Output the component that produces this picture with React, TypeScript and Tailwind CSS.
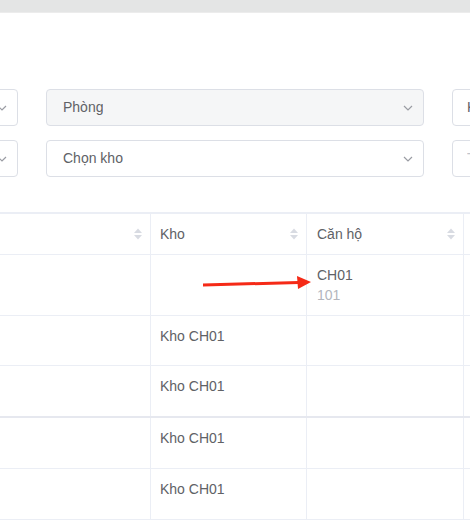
import React from "react";

const Chevron = () => (
  <svg width="10" height="6" viewBox="0 0 10 6" className="shrink-0">
    <polyline points="1,1 5,5 9,1" fill="none" stroke="#9a9ca3" strokeWidth="1.2" />
  </svg>
);

const SortCaret = () => (
  <svg width="10" height="14" viewBox="0 0 10 14" className="shrink-0">
    <polygon points="1,6 5,1.5 9,6" fill="#d8dbe2" />
    <polygon points="1,8 5,12.5 9,8" fill="#d8dbe2" />
  </svg>
);

type SelectProps = {
  width: string;
  value?: string;
  placeholder?: boolean;
  disabled?: boolean;
  arrow?: boolean;
  pad?: string;
};

function Select({ width, value, placeholder, disabled, arrow = true, pad = "pl-[16px]" }: SelectProps) {
  return (
    <div
      className={`${width} shrink-0 h-[37px] rounded-[4px] border border-[#dcdfe6] flex items-center justify-between ${pad} pr-[10px] ${
        disabled ? "bg-[#f5f6f7]" : "bg-white"
      }`}
    >
      <span className={`truncate ${placeholder ? "text-[#c0c4cc]" : "text-[#606266]"}`}>{value}</span>
      {arrow && <Chevron />}
    </div>
  );
}

const rows = [
  { kho: "", canho: "CH01", sub: "101", h: "h-[61px]", thick: false },
  { kho: "Kho CH01", canho: "", sub: "", h: "h-[50px]", thick: false },
  { kho: "Kho CH01", canho: "", sub: "", h: "h-[52px]", thick: true },
  { kho: "Kho CH01", canho: "", sub: "", h: "h-[51px]", thick: false },
  { kho: "Kho CH01", canho: "", sub: "", h: "h-[51px]", thick: false },
];

export default function App() {
  return (
    <div className="relative w-[470px] h-[520px] overflow-hidden bg-white text-[14px] text-[#606266] font-['Liberation_Sans',Arial,sans-serif]">
      {/* top bar */}
      <div className="h-[13px] bg-[#e4e5e5] border-b border-[#ececec]" />

      {/* filters */}
      <div className="pt-[76px] flex flex-col gap-[14px]">
        <div className="flex gap-[28px] ml-[-82px]">
          <Select width="w-[100px]" />
          <Select width="w-[378px]" value="Phòng" disabled />
          <Select width="w-[200px]" value="Khách hàng" arrow={false} pad="pl-[14px]" />
        </div>
        <div className="flex gap-[28px] ml-[-82px]">
          <Select width="w-[100px]" />
          <Select width="w-[378px]" value="Chọn kho" />
          <Select width="w-[200px]" value="Tìm kiếm" placeholder arrow={false} pad="pl-[14px]" />
        </div>
      </div>

      {/* table */}
      <div className="mt-[35px] w-[640px] border-t-2 border-[#ebeef5]">
        <div className="flex h-[41px] border-b border-[#ebeef5]">
          <div className="w-[151px] shrink-0 border-r border-[#ebeef5] flex items-center justify-end pr-[7px]">
            <SortCaret />
          </div>
          <div className="w-[156px] shrink-0 border-r border-[#ebeef5] flex items-center justify-between pl-[9px] pr-[7px]">
            <span>Kho</span>
            <SortCaret />
          </div>
          <div className="w-[157px] shrink-0 border-r border-[#ebeef5] flex items-center justify-between pl-[10px] pr-[7px]">
            <span>Căn hộ</span>
            <SortCaret />
          </div>
          <div className="flex-1" />
        </div>
        {rows.map((r, i) => (
          <div
            key={i}
            className={`flex ${r.h} ${r.thick ? "border-b-2 border-[#e6e8ef]" : "border-b border-[#ebeef5]"}`}
          >
            <div className="w-[151px] shrink-0 border-r border-[#ebeef5]" />
            <div className="w-[156px] shrink-0 border-r border-[#ebeef5] pl-[9px] pt-[10px] leading-[20px]">
              {r.kho}
            </div>
            <div className="w-[157px] shrink-0 border-r border-[#ebeef5] pl-[10px] pt-[10px] leading-[20px]">
              {r.canho && <div>{r.canho}</div>}
              {r.sub && <div className="text-[#b4b6bd]">{r.sub}</div>}
            </div>
            <div className="flex-1" />
          </div>
        ))}
      </div>

      {/* annotation arrow */}
      <svg
        className="absolute left-[200px] top-[274px]"
        width="116"
        height="18"
        viewBox="0 0 116 18"
      >
        <line x1="3" y1="11" x2="99" y2="8.5" stroke="#f52a17" strokeWidth="3" />
        <polygon points="97,2 111,8 98,15" fill="#f52a17" />
      </svg>
    </div>
  );
}
